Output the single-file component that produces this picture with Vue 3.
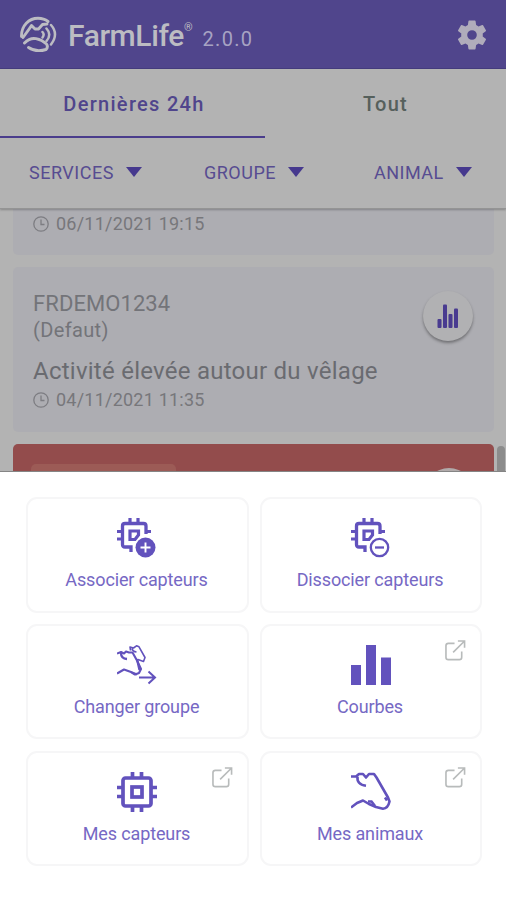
<script setup>
const filters = [
  { id: 'services', label: 'SERVICES' },
  { id: 'groupe', label: 'GROUPE' },
  { id: 'animal', label: 'ANIMAL' },
]

const actions = [
  { id: 'associate', label: 'Associer capteurs', icon: 'chip-plus' },
  { id: 'dissociate', label: 'Dissocier capteurs', icon: 'chip-minus' },
  { id: 'group', label: 'Changer groupe', icon: 'cows' },
  { id: 'charts', label: 'Courbes', icon: 'bars', external: true },
  { id: 'sensors', label: 'Mes capteurs', icon: 'chip', external: true },
  { id: 'animals', label: 'Mes animaux', icon: 'cow', external: true },
]
</script>

<template>
  <div class="screen">
    <header class="topbar">
      <svg class="logo" viewBox="0 0 38 38" fill="none" stroke="currentColor" stroke-linecap="round" stroke-linejoin="round">
        <path d="M1.500 20.500C1.300 9.500 9 2.300 18 2.300Q24 2.300 28 5.500M3 21.500L7 16Q10 12 11.500 9.500L15 13 18.500 13 22.500 8.500 27 8M4.500 27Q10 21.500 16 22.700T26.500 28Q28.500 31 26 33.500M8.500 31.500Q16 36.500 26 33.500" stroke-width="2.900" />
        <path d="M22.500 16q2.300 2.500 0 5.500M26.500 12.500q5.500 6 0 12.500M31 9q8 9 0 19.500" stroke-width="2.500" />
      </svg>
      <span class="brand">FarmLife</span>
      <span class="registered">®</span>
      <span class="version">2.0.0</span>
      <svg class="gear" viewBox="0 0 24 24" fill="currentColor">
        <path d="M19.140 12.940c.04-.3.060-.61.060-.94s-.02-.64-.07-.94l2.030-1.580a.49.49 0 0 0 .12-.61l-1.920-3.320a.488.488 0 0 0-.59-.22l-2.390.96c-.5-.38-1.030-.7-1.620-.94l-.36-2.540a.484.484 0 0 0-.48-.41h-3.840c-.24 0-.43.17-.47.41l-.36 2.540c-.59.24-1.130.57-1.620.94l-2.390-.96a.48.48 0 0 0-.59.22L2.740 8.870c-.12.21-.08.47.12.61l2.030 1.580c-.05.3-.09.63-.09.94s.02.64.07.94l-2.030 1.580a.49.49 0 0 0-.12.61l1.920 3.320c.12.22.37.29.59.22l2.390-.96c.5.38 1.030.7 1.620.94l.36 2.540c.05.24.24.41.48.41h3.840c.24 0 .44-.17.47-.41l.36-2.540c.59-.24 1.130-.56 1.620-.94l2.390.96c.22.08.47 0 .59-.22l1.920-3.320a.48.48 0 0 0-.12-.61zM12 15.200a3.200 3.200 0 1 1 0-6.400 3.200 3.200 0 0 1 0 6.400z" />
      </svg>
    </header>

    <section class="controls">
      <nav class="tabs">
        <span class="tab active">Dernières 24h</span>
        <span class="tab">Tout</span>
      </nav>
      <div class="filters">
        <span v-for="f in filters" :key="f.id" class="filter" :class="f.id">
          {{ f.label }}<i class="caret"></i>
        </span>
      </div>
    </section>

    <main class="list">
      <article class="event previous">
        <p class="date">
          <svg class="clock" viewBox="0 0 16 16"><circle cx="8" cy="8" r="7.200" /><path d="M8 3.500V8.500H11.500" /></svg>
          06/11/2021 19:15
        </p>
      </article>
      <article class="event">
        <div class="event-head">
          <div>
            <h2>FRDEMO1234</h2>
            <p class="group">(Defaut)</p>
          </div>
          <span class="chart-button">
            <svg viewBox="0 0 22 24" fill="currentColor">
              <rect x="0.500" y="15" width="4" height="9" rx="1" /><rect x="6" y="0.500" width="4" height="23.500" rx="1" />
              <rect x="11.500" y="10" width="4" height="14" rx="1" /><rect x="17" y="4.500" width="4" height="19.500" rx="1" />
            </svg>
          </span>
        </div>
        <h3>Activité élevée autour du vêlage</h3>
        <p class="date">
          <svg class="clock" viewBox="0 0 16 16"><circle cx="8" cy="8" r="7.200" /><path d="M8 3.500V8.500H11.500" /></svg>
          04/11/2021 11:35
        </p>
      </article>
      <article class="event alert">
        <span class="alert-title"></span>
        <span class="alert-button"></span>
      </article>
      <i class="scrollbar"></i>
    </main>

    <section class="sheet">
      <div v-for="a in actions" :key="a.id" class="tile">
        <svg class="tile-icon" viewBox="0 0 40 40" fill="none" stroke="currentColor">
          <template v-if="a.icon === 'chip'">
            <rect x="6" y="6" width="28" height="28" rx="2.500" stroke-width="3.700" />
            <rect x="15" y="15" width="10" height="10" stroke-width="3.700" />
            <path d="M15.500 0v5M24.500 0v5M15.500 35v5M24.500 35v5M0 15.500h5M0 24.500h5M35 15.500h5M35 24.500h5" stroke-width="3.700" />
          </template>
          <template v-else-if="a.icon === 'chip-plus' || a.icon === 'chip-minus'">
            <path d="M14 34v-5H8q-2.500 0-2.500-2.500V8q0-2.500 2.500-2.500h18.500q2.500 0 2.500 2.500v8" stroke-width="3.300" />
            <path d="M13 0v5M21 0v5M0 13.500h5M0 21h5M29 13.500h5" stroke-width="3.200" />
            <path d="M18 21.500H13V13H21.500V17L18 21.500z" stroke-width="3.200" />
            <template v-if="a.icon === 'chip-plus'">
              <circle cx="28.500" cy="29.500" r="10" fill="currentColor" stroke="none" />
              <path d="M23.500 29.500h10M28.500 24.500v10" stroke="#fff" stroke-width="1.900" />
            </template>
            <template v-else>
              <circle cx="28.500" cy="29.500" r="8.700" stroke-width="2.300" />
              <path d="M24 29.500h9" stroke-width="2.300" />
            </template>
          </template>
          <template v-else-if="a.icon === 'bars'">
            <path d="M5 40V20M20 40V0M35 40V12.500" stroke-width="10" />
          </template>
          <template v-else-if="a.icon === 'cow'">
            <path d="M0 4.500H5L8 2H12L15 5.500 18 2H23L25.500 5.500 37 25.500 38.500 29.500Q37 36.500 32 36.700L25 35 18 32 12 28.500 6 31 0 35.500" stroke-width="2.600" stroke-linejoin="round" />
            <path d="M6.500 4.500Q5.500 12.500 15 13.800M17 29.500H20.500L24 34M34 25.500L36 28.500" stroke-width="2.600" />
          </template>
          <template v-else>
            <path d="M0 8.500L4 7 7 8.500 9 6.500 12 7.500 15.500 7.500 20 15.500 24 24 22 28 18 29.500 14 27 7 24.500 0 28.500" stroke-width="2.100" stroke-linejoin="round" />
            <path d="M4 8Q4 13.500 10 14M20 14L22.500 25M15 27.500L20 29.500" stroke-width="2.300" />
            <path d="M13.500 5.500L13 2 16.500 3 19.500 .800 22 1.800 28 12.500 26.500 16.500 21 14.500M15 3.500Q15.500 6.500 19.500 7" stroke-width="1.600" stroke-linejoin="round" />
            <path d="M22 32.500H37.500M31.500 26.500L38 32.500 31.500 38.500" stroke-width="2" />
          </template>
        </svg>
        <span class="tile-label">{{ a.label }}</span>
        <svg v-if="a.external" class="external" viewBox="0 0 22 22" fill="none" stroke="currentColor" stroke-width="1.700">
          <path d="M10 3.500H3.500Q1 3.500 1 6v12q0 2.500 2.500 2.500h11.500q2.500 0 2.500-2.500v-6M8.500 13L20.500 1M13.500 1h7v7" />
        </svg>
      </div>
    </section>
  </div>
</template>

<style>
body { margin: 0; background: #fff; }
</style>

<style scoped>
* { box-sizing: border-box; }
h2, h3, p { margin: 0; font-weight: 400; }
.screen { width: 506px; height: 900px; display: flex; flex-direction: column; overflow: hidden; font-family: Roboto, "Liberation Sans", sans-serif; background: #b3b3b3; }
.topbar { height: 69px; flex: none; display: flex; align-items: center; padding: 0 16px 0 20px; background: #50458c; border-bottom: 1px solid #463c7e; color: #bcbcc2; }
.logo { width: 38px; height: 38px; margin-top: 2px; }
.brand { margin: 3px 0 0 10px; font-size: 30px; font-weight: 500; line-height: 40px; letter-spacing: -.400px; }
.registered { align-self: flex-start; margin: 21px 0 0 0; font-size: 11px; line-height: 14px; }
.version { margin: 9px 0 0 10px; font-size: 20px; letter-spacing: 1.300px; color: #a7a3c3; }
.gear { width: 36px; height: 36px; margin: 1px 0 0 auto; color: #b0acbb; }
.controls { height: 140px; flex: none; position: relative; z-index: 1; background: #b3b3b3; border-bottom: 1px solid #949494; box-shadow: 0 1px 2px rgba(0, 0, 0, .25); }
.tabs { display: flex; height: 69px; }
.tab { display: flex; align-items: center; justify-content: center; flex: 1; padding-top: 1px; font-size: 20px; font-weight: 500; letter-spacing: 1.300px; color: #56605c; }
.tab.active { flex: 0 0 265px; padding: 2px 0 0 3px; border-bottom: 2px solid #4a3d8c; color: #50458c; }
.filters { display: flex; height: 68px; }
.filter { display: flex; align-items: center; font-size: 18px; letter-spacing: .500px; color: #574c91; }
.services { width: 175px; padding-left: 29px; }
.groupe { width: 170px; padding-left: 29px; }
.animal { padding-left: 29px; }
.caret { margin-left: 12px; border: solid transparent; border-width: 10px 8px 0; border-top-color: #46398e; }
.list { height: 262px; flex: none; position: relative; padding: 0 12px 0 13px; overflow: hidden; }
.event { height: 165px; margin-bottom: 12px; padding: 24px 20px 0; border-radius: 5px; background: #adadb2; color: #737479; }
.event.previous { height: 46px; padding-top: 4px; border-radius: 0 0 5px 5px; }
.date { display: flex; align-items: center; gap: 7px; font-size: 18px; line-height: 22px; letter-spacing: .220px; color: #77777b; }
.clock { width: 16px; height: 16px; fill: none; stroke: #7d7d82; stroke-width: 1.300; }
.event-head { display: flex; justify-content: space-between; height: 64px; }
h2 { font-size: 22px; line-height: 26px; letter-spacing: .080px; }
.group { font-size: 20px; line-height: 26px; letter-spacing: .350px; }
h3 { margin-top: 2px; font-size: 24px; line-height: 28px; letter-spacing: .250px; color: #6a6b70; }
.event h3 + .date { margin-top: 4px; }
.chart-button { display: flex; align-items: center; justify-content: center; width: 50px; height: 50px; margin: 0 1px 0 0; border-radius: 50%; background: #b1b1b3; box-shadow: 0 2px 3px rgba(0, 0, 0, .35); color: #493b90; }
.chart-button svg { width: 22px; height: 24px; }
.event.alert { display: flex; justify-content: space-between; height: 60px; padding: 20px 20px 0 18px; background: #934c4c; }
.alert-title { width: 145px; height: 26px; border-radius: 5px; background: #9c5b56; }
.alert-button { width: 50px; height: 50px; margin-top: 4px; border-radius: 50%; background: #b1aaaa; }
.scrollbar { position: absolute; right: 1px; top: 237px; width: 8px; height: 40px; border-radius: 4px; background: #8c8c8c; }
.sheet { flex: 1; display: grid; grid-template-columns: 223px 222px; grid-auto-rows: 115.500px; gap: 11.300px 11px; padding: 25px 0 0 25.500px; background: #fff; border-top: 1px solid #858585; position: relative; }
.tile { position: relative; display: flex; flex-direction: column; align-items: center; padding-top: 19.400px; border: 2px solid #f6f6f7; border-radius: 11px; background: #fff; color: #6656bd; }
.tile-icon { width: 40px; height: 40px; color: #6252bd; }
.tile-label { margin: 11px 1px 0 0; font-size: 18px; line-height: 22px; letter-spacing: -.130px; color: #7668c4; white-space: nowrap; }
.external { position: absolute; top: 14.500px; right: 14px; width: 21px; height: 21px; color: #b8bbbb; }
</style>
